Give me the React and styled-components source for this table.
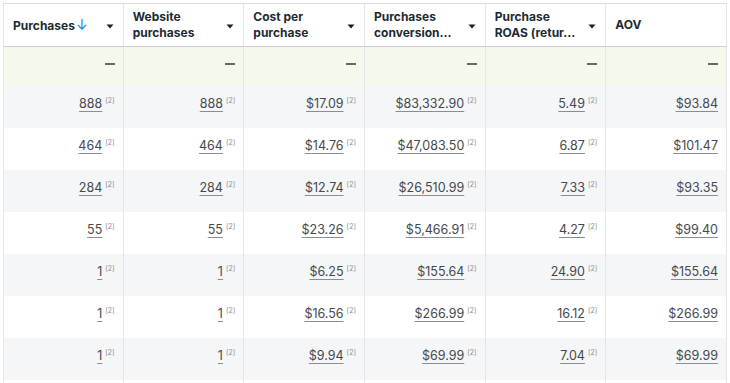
import React from 'react'
import styled, { createGlobalStyle } from 'styled-components'

const GlobalStyle = createGlobalStyle`
  body {
    margin: 0;
    background: #fff;
    font-family: Inter, Roboto, "Liberation Sans", sans-serif;
    overflow: hidden;
  }
`

const columns = [
  { title: ['Purchases'], sorted: true, caret: true },
  { title: ['Website', 'purchases'], caret: true },
  { title: ['Cost per', 'purchase'], caret: true },
  { title: ['Purchases', 'conversion...'], caret: true },
  { title: ['Purchase', 'ROAS (retur...'], caret: true },
  { title: ['AOV'], caret: false },
]

const rows = [
  ['888', '888', '$17.09', '$83,332.90', '5.49', '$93.84'],
  ['464', '464', '$14.76', '$47,083.50', '6.87', '$101.47'],
  ['284', '284', '$12.74', '$26,510.99', '7.33', '$93.35'],
  ['55', '55', '$23.26', '$5,466.91', '4.27', '$99.40'],
  ['1', '1', '$6.25', '$155.64', '24.90', '$155.64'],
  ['1', '1', '$16.56', '$266.99', '16.12', '$266.99'],
  ['1', '1', '$9.94', '$69.99', '7.04', '$69.99'],
]

const Caret = () => (
  <CaretIcon width="8" height="5" viewBox="0 0 8 5">
    <path d="M0.5 0.5 L7.5 0.5 L4 4.5 Z" fill="#1c1e21" />
  </CaretIcon>
)

const App = () => {
  return (
    <>
      <GlobalStyle />
      <Table>
        <Row>
          {columns.map((col, i) => (
            <HeadCell key={i} first={i === 0}>
              <HeadTitle>
                {col.title.map((line, j) => (
                  <span key={j}>
                    {line}
                    {col.sorted && <SortArrow>↓</SortArrow>}
                  </span>
                ))}
              </HeadTitle>
              {col.caret && <Caret />}
            </HeadCell>
          ))}
        </Row>
        <Row>
          {columns.map((col, i) => (
            <SummaryCell key={i} first={i === 0}>
              <Dash />
            </SummaryCell>
          ))}
        </Row>
        {rows.map((row, r) => (
          <Row key={r}>
            {row.map((val, i) => (
              <DataCell key={i} first={i === 0} shaded={r % 2 === 0}>
                <Value>{val}</Value>
                {i < 5 && <Note>[2]</Note>}
              </DataCell>
            ))}
          </Row>
        ))}
        <Row>
          {columns.map((col, i) => (
            <Filler key={i} first={i === 0} />
          ))}
        </Row>
      </Table>
    </>
  )
}

const Table = styled.div`
  margin: 3px 0 0 3px;
  width: 724px;
  border-top: 1px solid #dadde1;
`
const Row = styled.div`
  display: grid;
  grid-template-columns: repeat(6, 1fr);
`
const Cell = styled.div`
  box-sizing: border-box;
  border-right: 1px solid #e4e6eb;
  border-left: ${(p) => (p.first ? '1px solid #e4e6eb' : 'none')};
`
const HeadCell = styled(Cell)`
  height: 43px;
  display: flex;
  align-items: center;
  justify-content: space-between;
  padding: 0 9px 0 9px;
  border-bottom: 1px solid #ccd0d5;
`
const HeadTitle = styled.div`
  display: flex;
  flex-direction: column;
  font-size: 12px;
  font-weight: 700;
  line-height: 16px;
  color: #1c2b33;
  white-space: nowrap;
`
const SortArrow = styled.span`
  color: #1877f2;
  font-weight: 400;
  font-size: 14px;
  margin-left: 1px;
`
const CaretIcon = styled.svg`
  flex: none;
  margin-top: 2px;
`
const SummaryCell = styled(Cell)`
  height: 39px;
  background: #f4f9ec;
  display: flex;
  justify-content: flex-end;
  padding: 16px 8px 0 0;
`
const Dash = styled.div`
  width: 10px;
  height: 1.5px;
  background: #65676b;
`
const DataCell = styled(Cell)`
  height: 42px;
  background: ${(p) => (p.shaded ? '#f5f6f7' : '#fff')};
  display: flex;
  justify-content: flex-end;
  align-items: flex-start;
  padding: 10px 8px 0 0;
  color: #444950;
`
const Filler = styled(Cell)`
  height: 3px;
`
const Value = styled.span`
  font-size: 12.5px;
  line-height: 16px;
  text-decoration: underline;
  text-decoration-color: #8a8d91;
  text-underline-offset: 3px;
  text-decoration-thickness: 1px;
`
const Note = styled.span`
  font-size: 7px;
  line-height: 10px;
  color: #8a8d91;
  margin-left: 3px;
`

export default App
